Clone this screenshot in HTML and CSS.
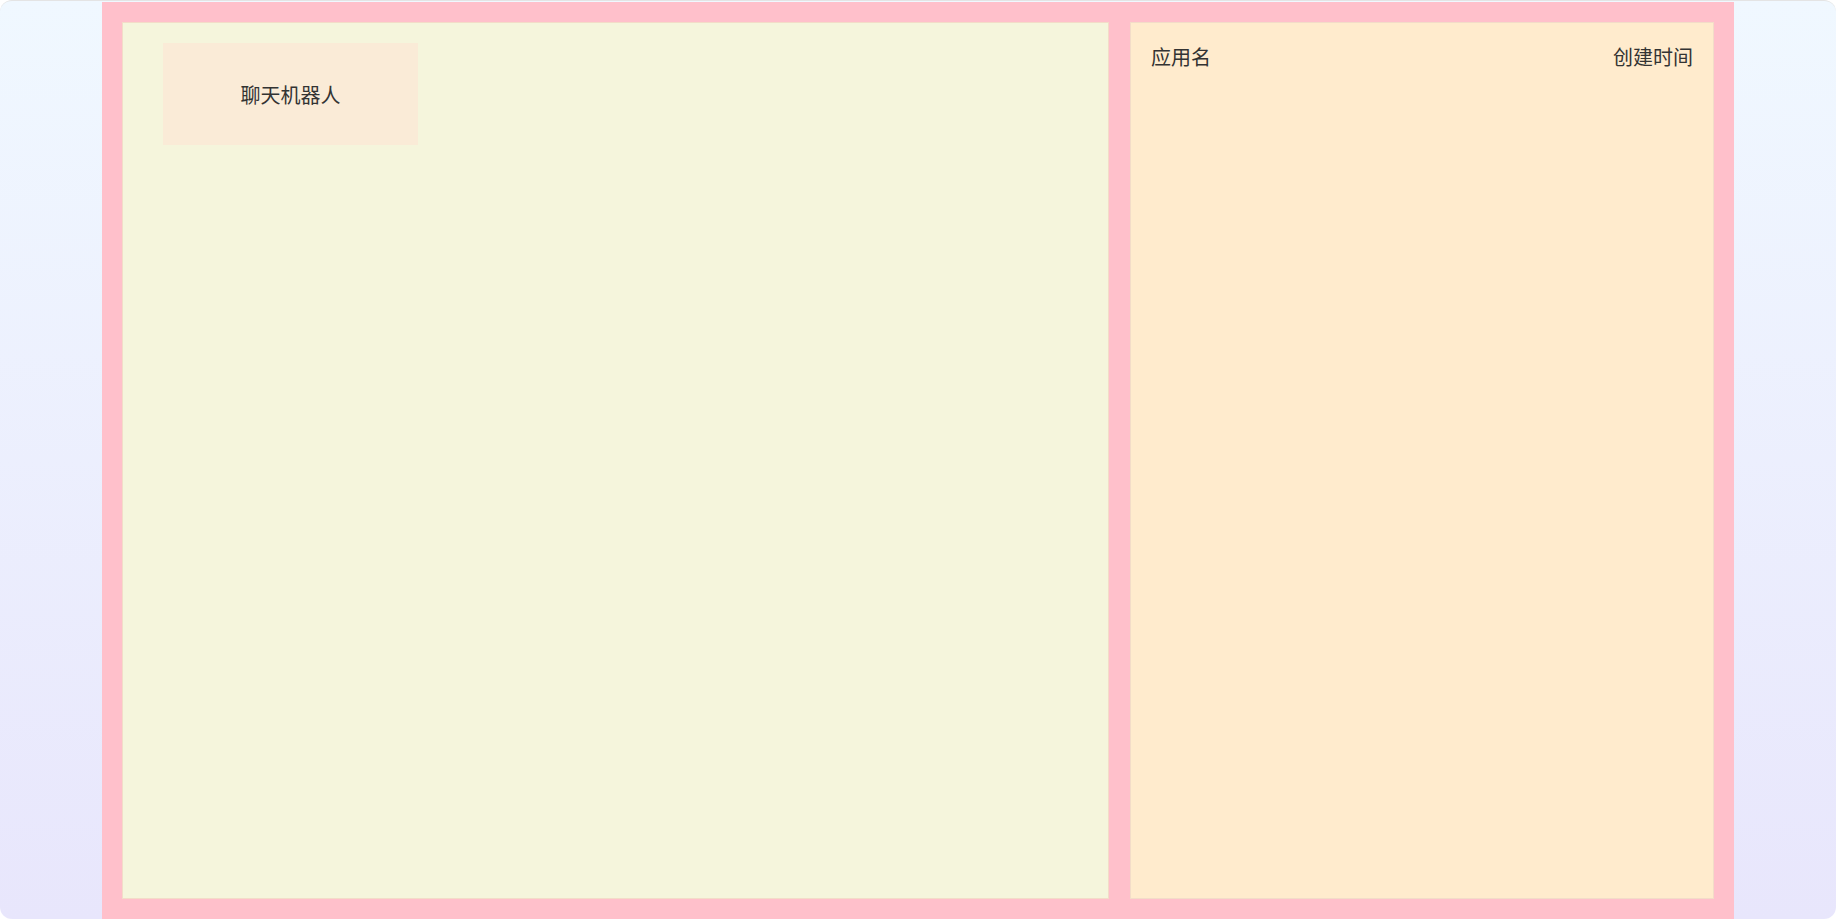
FILE: index.html
```html
<!DOCTYPE html>
<html lang="zh">
<head>
<meta charset="utf-8">
<title>应用</title>
<link rel="stylesheet" href="styles.css">
</head>
<body>
<div class="app">
  <div class="main">
    <section class="left">
      <div class="card">聊天机器人</div>
    </section>
    <section class="right">
      <div class="header">
        <span>应用名</span>
        <span>创建时间</span>
      </div>
    </section>
  </div>
</div>
</body>
</html>
```
FILE: styles.css
```css
html, body {
  margin: 0;
  padding: 0;
}
body {
  font-family: "Noto Sans CJK SC", "Liberation Sans", sans-serif;
  color: #333;
  overflow: hidden;
}
.app {
  box-sizing: border-box;
  height: 919px;
  border-top: 1px solid #e4e4e4;
  border-radius: 12px;
  background: linear-gradient(to bottom, #f0f8ff, #e8e6fc);
  display: flex;
  justify-content: center;
  align-items: flex-start;
}
.main {
  box-sizing: border-box;
  width: 1632px;
  height: 918px;
  margin-top: 1px;
  margin-bottom: -1px;
  padding: 20px 20px 20px 20px;
  background: #ffc0cb;
  display: flex;
  gap: 21px;
}
.left {
  box-sizing: border-box;
  width: 987px;
  height: 877px;
  background: #f5f5dc;
  border: 1px solid #f3dcc8;
  padding: 20px 40px;
}
.card {
  width: 255px;
  height: 102px;
  background: #faebd7;
  display: flex;
  align-items: center;
  justify-content: center;
  font-size: 20px;
}
.right {
  box-sizing: border-box;
  flex: 1;
  height: 877px;
  background: #ffebcd;
  border: 1px solid #f3dcc8;
  padding: 20px;
}
.header {
  display: flex;
  justify-content: space-between;
  font-size: 20px;
  line-height: 28px;
}
```
